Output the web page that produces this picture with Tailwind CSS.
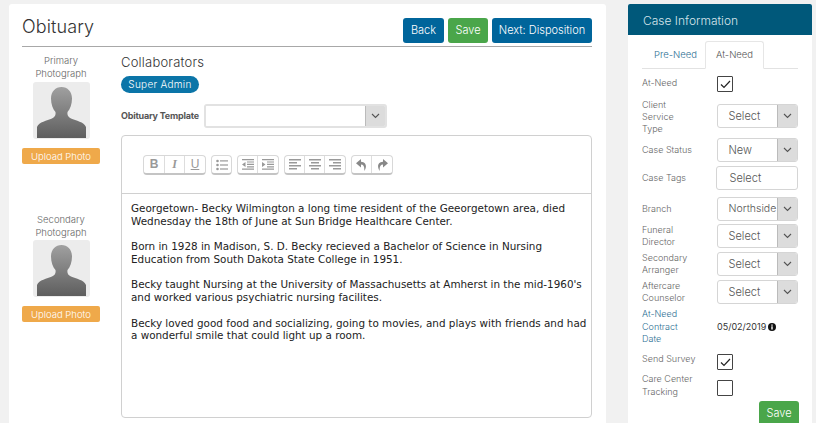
<!DOCTYPE html>
<html lang="en">

<head>
    <meta charset="UTF-8">
    <meta name="viewport" content="width=device-width, initial-scale=1.0">
    <title>Obituary</title>
    <script src="https://cdn.jsdelivr.net/npm/@tailwindcss/browser@4"></script>
</head>

<body class="bg-[#f1f1f1] font-['Inter','Liberation_Sans',sans-serif] font-light overflow-hidden">
    <div class="flex h-[423px] w-[816px] overflow-hidden pt-[4px]">
        <!-- main card -->
        <div class="ml-[9px] h-[440px] w-[597px] rounded-t-[3px] bg-white pl-[13px] pr-[14px]">
            <div class="flex h-[43px] items-start justify-between border-b border-[#a8a8a8]">
                <h1 class="mt-[11px] text-[18px] leading-[24px] tracking-[0.1px] text-[#333333]">Obituary</h1>
                <div class="mt-[14px] flex gap-[4px] text-[11px] text-white">
                    <button class="h-[25px] w-[41px] rounded-[3px] bg-[#00659b]">Back</button>
                    <button class="h-[25px] w-[40px] rounded-[3px] bg-[#4aa64a]">Save</button>
                    <button class="h-[25px] w-[100px] rounded-[3px] bg-[#00659b]">Next: Disposition</button>
                </div>
            </div>

            <div class="flex">
                <!-- photos -->
                <div class="w-[78px] shrink-0 text-center text-[9.5px] leading-[13px] text-[#666666]">
                    <div class="pt-[7px]">Primary<br>Photograph</div>
                    <div class="mx-auto mt-[2px] h-[57px] w-[57px] overflow-hidden rounded-[3px] bg-[#ececec]">
                        <svg viewBox="0 0 57 57" class="h-full w-full">
                            <defs>
                                <linearGradient id="p1" x1="0" y1="0" x2="0" y2="1">
                                    <stop offset="0" stop-color="#a0a0a0" />
                                    <stop offset="1" stop-color="#5e5e5e" />
                                </linearGradient>
                            </defs>
                            <path fill="url(#p1)" d="M28.500 5C22.500 5 18 9.500 18 16.500C18 22 19.800 27 22.500 30C23 33 22 35 19 36.500C14 39 6 39.500 4 45L4 56L53 56L53 45C51 39.500 43 39 38 36.500C35 35 34 33 34.500 30C37.200 27 39 22 39 16.500C39 9.500 34.500 5 28.500 5Z" />
                        </svg>
                    </div>
                    <button class="mt-[9px] h-[16px] w-[78px] rounded-[2px] bg-[#efa94a] text-[9.5px] text-white">Upload Photo</button>

                    <div class="pt-[49px]">Secondary<br>Photograph</div>
                    <div class="mx-auto mt-[1px] h-[57px] w-[57px] overflow-hidden rounded-[3px] bg-[#ececec]">
                        <svg viewBox="0 0 57 57" class="h-full w-full">
                            <path fill="url(#p1)" d="M28.500 5C22.500 5 18 9.500 18 16.500C18 22 19.800 27 22.500 30C23 33 22 35 19 36.500C14 39 6 39.500 4 45L4 56L53 56L53 45C51 39.500 43 39 38 36.500C35 35 34 33 34.500 30C37.200 27 39 22 39 16.500C39 9.500 34.500 5 28.500 5Z" />
                        </svg>
                    </div>
                    <button class="mt-[9px] h-[16px] w-[78px] rounded-[2px] bg-[#efa94a] text-[9.5px] text-white">Upload Photo</button>
                </div>

                <!-- editor column -->
                <div class="ml-[21px] w-[471px]">
                    <div class="pt-[7px] text-[13px] leading-[16px] tracking-[0.2px] text-[#333333]">Collaborators</div>
                    <span class="mt-[4px] inline-block h-[17px] w-[78px] rounded-full bg-[#0b75a8] text-center text-[10px] leading-[17px] tracking-[0.3px] text-white">Super Admin</span>

                    <div class="mt-[10px] flex items-center">
                        <label class="w-[83px] text-[9px] font-bold tracking-[-0.2px] text-[#555555]">Obituary Template</label>
                        <div class="flex h-[24px] w-[183px] overflow-hidden rounded-[3px] border-2 border-[#e2e2e2]">
                            <div class="flex-1 bg-white"></div>
                            <div class="flex w-[20px] items-center justify-center border-l border-[#bbbbbb] bg-[#dcdcdc]">
                                <svg width="9" height="6" viewBox="0 0 9 6" fill="none" stroke="#555555" stroke-width="1.100"><path d="M1 1l3.500 3.500L8 1" /></svg>
                            </div>
                        </div>
                    </div>

                    <div class="mt-[7px] h-[283px] rounded-[4px] border border-[#d0d0d0]">
                        <div class="flex h-[58px] items-start gap-[5px] border-b border-[#d0d0d0] pl-[21px] pt-[19px]">
                            <div class="flex h-[20px] divide-x divide-[#dddddd] rounded-[4px] border border-[#d8d8d8] border-b-2 border-b-[#c4c4c4] bg-white text-[12px] leading-[17px] text-[#999999]">
                                <span class="w-[21px] text-center font-bold font-['Liberation_Sans',sans-serif]">B</span>
                                <span class="w-[20px] text-center font-bold italic font-['Liberation_Serif',serif]">I</span>
                                <span class="w-[20px] text-center underline font-['Liberation_Sans',sans-serif]">U</span>
                            </div>
                            <div class="flex h-[20px] w-[21px] items-center justify-center rounded-[4px] border border-[#d8d8d8] border-b-2 border-b-[#c4c4c4] bg-white">
                                <svg width="12" height="12" viewBox="0 0 12 12" fill="#999999"><circle cx="1.500" cy="2" r="1.300" /><circle cx="1.500" cy="6" r="1.300" /><circle cx="1.500" cy="10" r="1.300" /><rect x="4" y="1.300" width="8" height="1.200" /><rect x="4" y="5.400" width="8" height="1.200" /><rect x="4" y="9.400" width="8" height="1.200" /></svg>
                            </div>
                            <div class="flex h-[20px] divide-x divide-[#dddddd] rounded-[4px] border border-[#d8d8d8] border-b-2 border-b-[#c4c4c4] bg-white">
                                <span class="flex w-[20px] items-center justify-center">
                                    <svg width="12" height="11" viewBox="0 0 12 11" fill="#999999"><path d="M0 0h12v1.200H0zM5 2.400h7v1.200H5zM5 4.800h7V6H5zM5 7.200h7v1.200H5zM0 9.600h12v1.200H0zM3.500 3v5L0 5.500z" /></svg>
                                </span>
                                <span class="flex w-[20px] items-center justify-center">
                                    <svg width="12" height="11" viewBox="0 0 12 11" fill="#999999"><path d="M0 0h12v1.200H0zM5 2.400h7v1.200H5zM5 4.800h7V6H5zM5 7.200h7v1.200H5zM0 9.600h12v1.200H0zM0 3v5l3.500-2.500z" /></svg>
                                </span>
                            </div>
                            <div class="flex h-[20px] divide-x divide-[#dddddd] rounded-[4px] border border-[#d8d8d8] border-b-2 border-b-[#c4c4c4] bg-white">
                                <span class="flex w-[20px] items-center justify-center">
                                    <svg width="12" height="11" viewBox="0 0 12 11" fill="#999999"><path d="M0 0h12v1.500H0zM0 3h8v1.500H0zM0 6h12v1.500H0zM0 9h8v1.500H0z" /></svg>
                                </span>
                                <span class="flex w-[20px] items-center justify-center">
                                    <svg width="12" height="11" viewBox="0 0 12 11" fill="#999999"><path d="M0 0h12v1.500H0zM2 3h8v1.500H2zM0 6h12v1.500H0zM2 9h8v1.500H2z" /></svg>
                                </span>
                                <span class="flex w-[20px] items-center justify-center">
                                    <svg width="12" height="11" viewBox="0 0 12 11" fill="#999999"><path d="M0 0h12v1.500H0zM4 3h8v1.500H4zM0 6h12v1.500H0zM4 9h8v1.500H4z" /></svg>
                                </span>
                            </div>
                            <div class="flex h-[20px] divide-x divide-[#dddddd] rounded-[4px] border border-[#d8d8d8] border-b-2 border-b-[#c4c4c4] bg-white">
                                <span class="flex w-[20px] items-center justify-center">
                                    <svg width="11" height="12" viewBox="0 0 11 12" fill="#888888"><path d="M5 0L0 4.200L5 8.400V5.600C7.500 5.600 8.600 7.400 8.300 12C10.400 9.500 11.500 3 5 2.800z" /></svg>
                                </span>
                                <span class="flex w-[20px] items-center justify-center">
                                    <svg width="11" height="12" viewBox="0 0 11 12" fill="#888888"><path d="M6 0L11 4.200L6 8.400V5.600C3.500 5.600 2.400 7.400 2.700 12C0.600 9.500 -0.500 3 6 2.800z" /></svg>
                                </span>
                            </div>
                        </div>
                        <div class="pl-[9px] pr-[3px] pt-[8px] font-['DejaVu_Sans',sans-serif] font-normal text-[10.4px] leading-[12.600px] text-[#222222]">
                            <p class="mb-[13px]">Georgetown- Becky Wilmington a long time resident of the Geeorgetown area, died Wednesday the 18th of June at Sun Bridge Healthcare Center.</p>
                            <p class="mb-[13px]">Born in 1928 in Madison, S. D. Becky recieved a Bachelor of Science in Nursing Education from South Dakota State College in 1951.</p>
                            <p class="mb-[13px]">Becky taught Nursing at the University of Massachusetts at Amherst in the mid-1960's and worked various psychiatric nursing facilites.</p>
                            <p>Becky loved good food and socializing, going to movies, and plays with friends and had a wonderful smile that could light up a room.</p>
                        </div>
                    </div>
                </div>
            </div>
        </div>

        <!-- case information -->
        <div class="ml-[22px] h-[440px] w-[184px] bg-white">
            <div class="h-[31px] rounded-t-[2px] bg-[#00587a] pl-[15px] text-[12px] leading-[33px] text-[#d5e4ea]">Case Information</div>
            <div class="px-[14px] text-[9px] text-[#666666]">
                <div class="mt-[6px] flex h-[28px] border-b border-[#e2e2e2] text-[9.5px]">
                    <div class="w-[63px] pl-[12px] leading-[28px] text-[#2d6f93]">Pre-Need</div>
                    <div class="h-[28px] w-[59px] rounded-t-[3px] border border-b-white border-[#e6e6e6] bg-white text-center leading-[26px] text-[#555555]">At-Need</div>
                </div>

                <div class="mt-[7px] flex h-[17px] items-start">
                    <span class="w-[75px] leading-[13px]">At-Need</span>
                    <div class="flex h-[16px] w-[16px] items-center justify-center rounded-[1px] border border-[#444444]">
                        <svg width="11" height="9" viewBox="0 0 11 9" fill="none" stroke="#222222" stroke-width="1.200"><path d="M1 4.500l3 3L10 1" /></svg>
                    </div>
                </div>

                <div class="mt-[10px] flex h-[36px] items-start">
                    <span class="mt-[-4px] w-[75px] leading-[12px]">Client<br>Service<br>Type</span>
                    <div class="mt-[1px] flex h-[24px] w-[82px] overflow-hidden rounded-[3px] border border-[#d5d5d5] text-[11px] leading-[22px] text-[#555555]">
                        <span class="flex-1 pl-[11px]">Select</span>
                        <span class="flex w-[20px] items-center justify-center border-l border-[#bbbbbb] bg-[#dcdcdc]"><svg width="9" height="6" viewBox="0 0 9 6" fill="none" stroke="#555555" stroke-width="1.100"><path d="M1 1l3.500 3.500L8 1" /></svg></span>
                    </div>
                </div>

                <div class="mt-[-3px] flex h-[28px] items-center">
                    <span class="w-[75px]">Case Status</span>
                    <div class="flex h-[24px] w-[82px] overflow-hidden rounded-[3px] border border-[#d5d5d5] text-[11px] leading-[22px] text-[#555555]">
                        <span class="flex-1 pl-[11px]">New</span>
                        <span class="flex w-[20px] items-center justify-center border-l border-[#bbbbbb] bg-[#dcdcdc]"><svg width="9" height="6" viewBox="0 0 9 6" fill="none" stroke="#555555" stroke-width="1.100"><path d="M1 1l3.500 3.500L8 1" /></svg></span>
                    </div>
                </div>

                <div class="flex h-[28px] items-center">
                    <span class="w-[75px]">Case Tags</span>
                    <div class="h-[24px] w-[82px] rounded-[3px] border border-[#d5d5d5] pl-[12px] text-[11px] leading-[22px] text-[#555555]">Select</div>
                </div>

                <div class="mt-[3px] flex h-[28px] items-center">
                    <span class="w-[75px]">Branch</span>
                    <div class="flex h-[24px] w-[82px] overflow-hidden rounded-[3px] border border-[#d5d5d5] text-[11px] leading-[22px] text-[#555555]">
                        <span class="flex-1 pl-[11px] text-[10.5px]">Northside</span>
                        <span class="flex w-[20px] shrink-0 items-center justify-center border-l border-[#bbbbbb] bg-[#dcdcdc]"><svg width="9" height="6" viewBox="0 0 9 6" fill="none" stroke="#555555" stroke-width="1.100"><path d="M1 1l3.500 3.500L8 1" /></svg></span>
                    </div>
                </div>

                <div class="mt-[-1px] flex h-[28px] items-center">
                    <span class="w-[75px] leading-[12px]">Funeral<br>Director</span>
                    <div class="flex h-[24px] w-[82px] overflow-hidden rounded-[3px] border border-[#d5d5d5] text-[11px] leading-[22px] text-[#555555]">
                        <span class="flex-1 pl-[11px]">Select</span>
                        <span class="flex w-[20px] items-center justify-center border-l border-[#bbbbbb] bg-[#dcdcdc]"><svg width="9" height="6" viewBox="0 0 9 6" fill="none" stroke="#555555" stroke-width="1.100"><path d="M1 1l3.500 3.500L8 1" /></svg></span>
                    </div>
                </div>

                <div class="flex h-[28px] items-center">
                    <span class="w-[75px] leading-[12px]">Secondary<br>Arranger</span>
                    <div class="flex h-[24px] w-[82px] overflow-hidden rounded-[3px] border border-[#d5d5d5] text-[11px] leading-[22px] text-[#555555]">
                        <span class="flex-1 pl-[11px]">Select</span>
                        <span class="flex w-[20px] items-center justify-center border-l border-[#bbbbbb] bg-[#dcdcdc]"><svg width="9" height="6" viewBox="0 0 9 6" fill="none" stroke="#555555" stroke-width="1.100"><path d="M1 1l3.500 3.500L8 1" /></svg></span>
                    </div>
                </div>

                <div class="flex h-[28px] items-center">
                    <span class="w-[75px] leading-[12px]">Aftercare<br>Counselor</span>
                    <div class="flex h-[24px] w-[82px] overflow-hidden rounded-[3px] border border-[#d5d5d5] text-[11px] leading-[22px] text-[#555555]">
                        <span class="flex-1 pl-[11px]">Select</span>
                        <span class="flex w-[20px] items-center justify-center border-l border-[#bbbbbb] bg-[#dcdcdc]"><svg width="9" height="6" viewBox="0 0 9 6" fill="none" stroke="#555555" stroke-width="1.100"><path d="M1 1l3.500 3.500L8 1" /></svg></span>
                    </div>
                </div>

                <div class="mt-[2px] flex h-[38px] items-center">
                    <span class="w-[75px] leading-[12.500px] text-[#2d6f93]">At-Need<br>Contract<br>Date</span>
                    <span class="flex items-center gap-[2px] text-[9px] font-normal text-[#333333]">05/02/2019
                        <svg width="8" height="8" viewBox="0 0 8 8"><circle cx="4" cy="4" r="4" fill="#111111" /><rect x="3.300" y="3.300" width="1.400" height="3.200" fill="white" /><rect x="3.300" y="1.500" width="1.400" height="1.200" fill="white" /></svg>
                    </span>
                </div>

                <div class="mt-[8px] flex h-[17px] items-start">
                    <span class="mt-[-2px] w-[75px] leading-[13px]">Send Survey</span>
                    <div class="flex h-[16px] w-[16px] items-center justify-center rounded-[1px] border border-[#444444]">
                        <svg width="11" height="9" viewBox="0 0 11 9" fill="none" stroke="#222222" stroke-width="1.200"><path d="M1 4.500l3 3L10 1" /></svg>
                    </div>
                </div>

                <div class="mt-[4px] flex h-[26px] items-start">
                    <span class="mt-[-2px] w-[75px] leading-[12.500px]">Care Center<br>Tracking</span>
                    <div class="mt-[5px] h-[16px] w-[16px] rounded-[1px] border border-[#444444]"></div>
                </div>

                <div class="flex justify-end">
                    <button class="mr-[-1px] h-[25px] w-[40px] rounded-[3px] bg-[#4aa64a] text-[11px] text-white">Save</button>
                </div>
            </div>
        </div>
    </div>
</body>

</html>
